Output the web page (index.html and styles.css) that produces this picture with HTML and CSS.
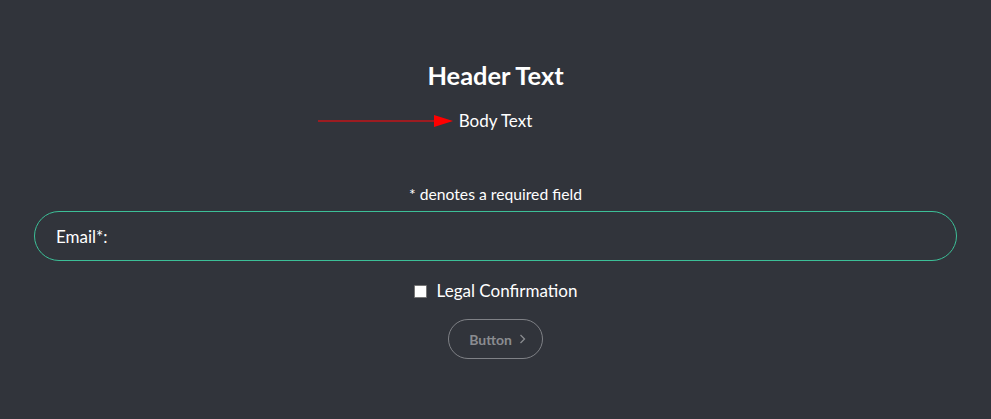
FILE: index.html
```html
<!DOCTYPE html>
<html lang="en">
<head>
<meta charset="utf-8">
<title>Form</title>
<link rel="stylesheet" href="styles.css">
</head>
<body>
<main class="page">
  <h1 class="header">Header Text</h1>
  <div class="body-row">
    <svg class="arrow" width="136" height="14" viewBox="0 0 136 14" aria-hidden="true">
      <line x1="0" y1="7" x2="120" y2="7" stroke="#c0151a" stroke-width="1.5"/>
      <polygon points="116,1 135,7 116,13" fill="#ff0000"/>
    </svg>
    <span class="body-text">Body Text</span>
  </div>
  <p class="required">* denotes a required field</p>
  <label class="field">
    <span class="field-label">Email*:</span>
    <input class="field-input" type="email">
  </label>
  <label class="check">
    <input type="checkbox" class="check-box">
    <span class="check-label">Legal Confirmation</span>
  </label>
  <button class="btn" type="button">Button
    <svg class="chev" width="7" height="10" viewBox="0 0 7 10" aria-hidden="true"><path d="M1.5 1 L5.5 5 L1.5 9" fill="none" stroke="#8a8c90" stroke-width="1.3"/></svg>
  </button>
</main>
</body>
</html>
```
FILE: styles.css
```css
html, body {
  margin: 0;
  padding: 0;
  background: #31343b;
  height: 100%;
}
body {
  font-family: Lato, "Open Sans", sans-serif;
  color: #ffffff;
}
.page {
  display: flex;
  flex-direction: column;
  align-items: center;
  padding: 58px 34px 0;
}
.header {
  margin: 0;
  font-size: 25.4px;
  font-weight: 700;
  line-height: 34px;
}
.body-row {
  margin-top: 17px;
  display: flex;
  align-items: center;
  gap: 5px;
  margin-left: -141px;
}
.arrow {
  display: block;
}
.body-text {
  font-size: 17px;
  line-height: 24px;
}
.required {
  margin: 51px 0 0;
  font-size: 15.7px;
  line-height: 20px;
}
.field {
  margin-top: 7px;
  align-self: stretch;
  height: 50px;
  box-sizing: border-box;
  border: 1px solid #3cbf97;
  border-radius: 25px;
  display: flex;
  align-items: center;
  padding: 0 21px;
  gap: 6px;
}
.field-label {
  font-size: 17px;
  white-space: nowrap;
}
.field-input {
  flex: 1;
  background: transparent;
  border: 0;
  outline: none;
  color: #fff;
  font: inherit;
}
.check {
  margin-top: 18px;
  display: flex;
  align-items: center;
  gap: 10px;
}
.check-box {
  margin: 0;
  width: 13px;
  height: 13px;
  appearance: none;
  background: #ffffff;
  border: 1px solid #767676;
  border-radius: 1px;
  box-sizing: border-box;
}
.check-label {
  font-size: 17px;
  line-height: 24px;
}
.btn {
  margin-top: 16px;
  width: 95px;
  height: 40px;
  box-sizing: border-box;
  border: 1px solid #7f8186;
  border-radius: 20px;
  background: transparent;
  color: #8a8c90;
  font-family: Lato, sans-serif;
  font-weight: 700;
  font-size: 14px;
  display: flex;
  align-items: center;
  justify-content: center;
  gap: 7px;
  padding: 0 0 0 4px;
}
.chev { display: block; }
```
